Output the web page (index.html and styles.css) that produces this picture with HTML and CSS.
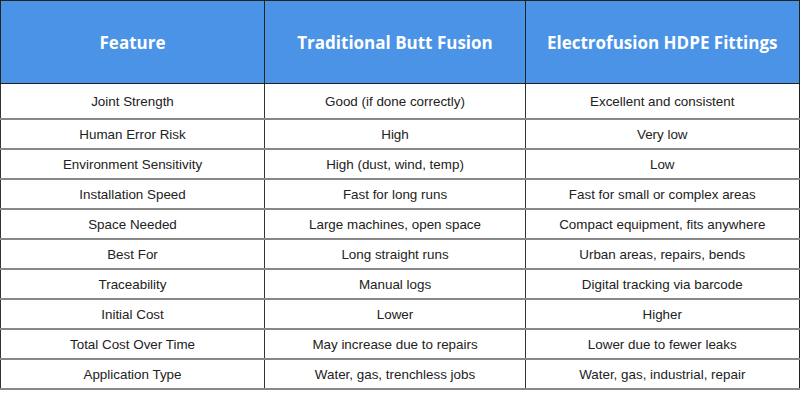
FILE: index.html
```html
<!DOCTYPE html>
<html>
<head>
<meta charset="utf-8">
<link rel="stylesheet" href="styles.css">
</head>
<body>
<table class="cmp">
  <colgroup>
    <col class="c1"><col class="c2"><col class="c3">
  </colgroup>
  <thead>
    <tr class="head">
      <th>Feature</th>
      <th>Traditional Butt Fusion</th>
      <th>Electrofusion HDPE Fittings</th>
    </tr>
  </thead>
  <tbody>
    <tr class="first"><td>Joint Strength</td><td>Good (if done correctly)</td><td>Excellent and consistent</td></tr>
    <tr><td>Human Error Risk</td><td>High</td><td>Very low</td></tr>
    <tr><td>Environment Sensitivity</td><td>High (dust, wind, temp)</td><td>Low</td></tr>
    <tr><td>Installation Speed</td><td>Fast for long runs</td><td>Fast for small or complex areas</td></tr>
    <tr><td>Space Needed</td><td>Large machines, open space</td><td>Compact equipment, fits anywhere</td></tr>
    <tr><td>Best For</td><td>Long straight runs</td><td>Urban areas, repairs, bends</td></tr>
    <tr><td>Traceability</td><td>Manual logs</td><td>Digital tracking via barcode</td></tr>
    <tr><td>Initial Cost</td><td>Lower</td><td>Higher</td></tr>
    <tr><td>Total Cost Over Time</td><td>May increase due to repairs</td><td>Lower due to fewer leaks</td></tr>
    <tr><td>Application Type</td><td>Water, gas, trenchless jobs</td><td>Water, gas, industrial, repair</td></tr>
  </tbody>
</table>
</body>
</html>
```
FILE: styles.css
```css
html, body {
  margin: 0;
  padding: 0;
  background: #ffffff;
}
.cmp {
  border-collapse: collapse;
  table-layout: fixed;
  width: 799px;
  font-family: "Liberation Sans", Arial, sans-serif;
  border-left: 1px solid #222;
  border-right: 2px solid #222;
  border-top: 1px solid #222;
  border-bottom: 2px solid #888;
}
.c1 { width: 264px; }
.c2 { width: 261px; }
.c3 { width: 274px; }
.cmp th {
  background: #4a93e6;
  color: #ffffff;
  font-family: "Open Sans", "Liberation Sans", sans-serif;
  font-weight: 700;
  font-size: 17px;
  height: 82px;
  padding: 0;
  text-align: center;
  vertical-align: middle;
  border-left: 1px solid #222;
  border-bottom: 1px solid #222;
}
.cmp td {
  height: 28px;
  padding: 0;
  font-size: 13.4px;
  color: #222;
  text-align: center;
  vertical-align: middle;
  border-left: 1px solid #333;
  border-bottom: 2px solid #888;
}
.cmp tr.first td { height: 34px; }
```
